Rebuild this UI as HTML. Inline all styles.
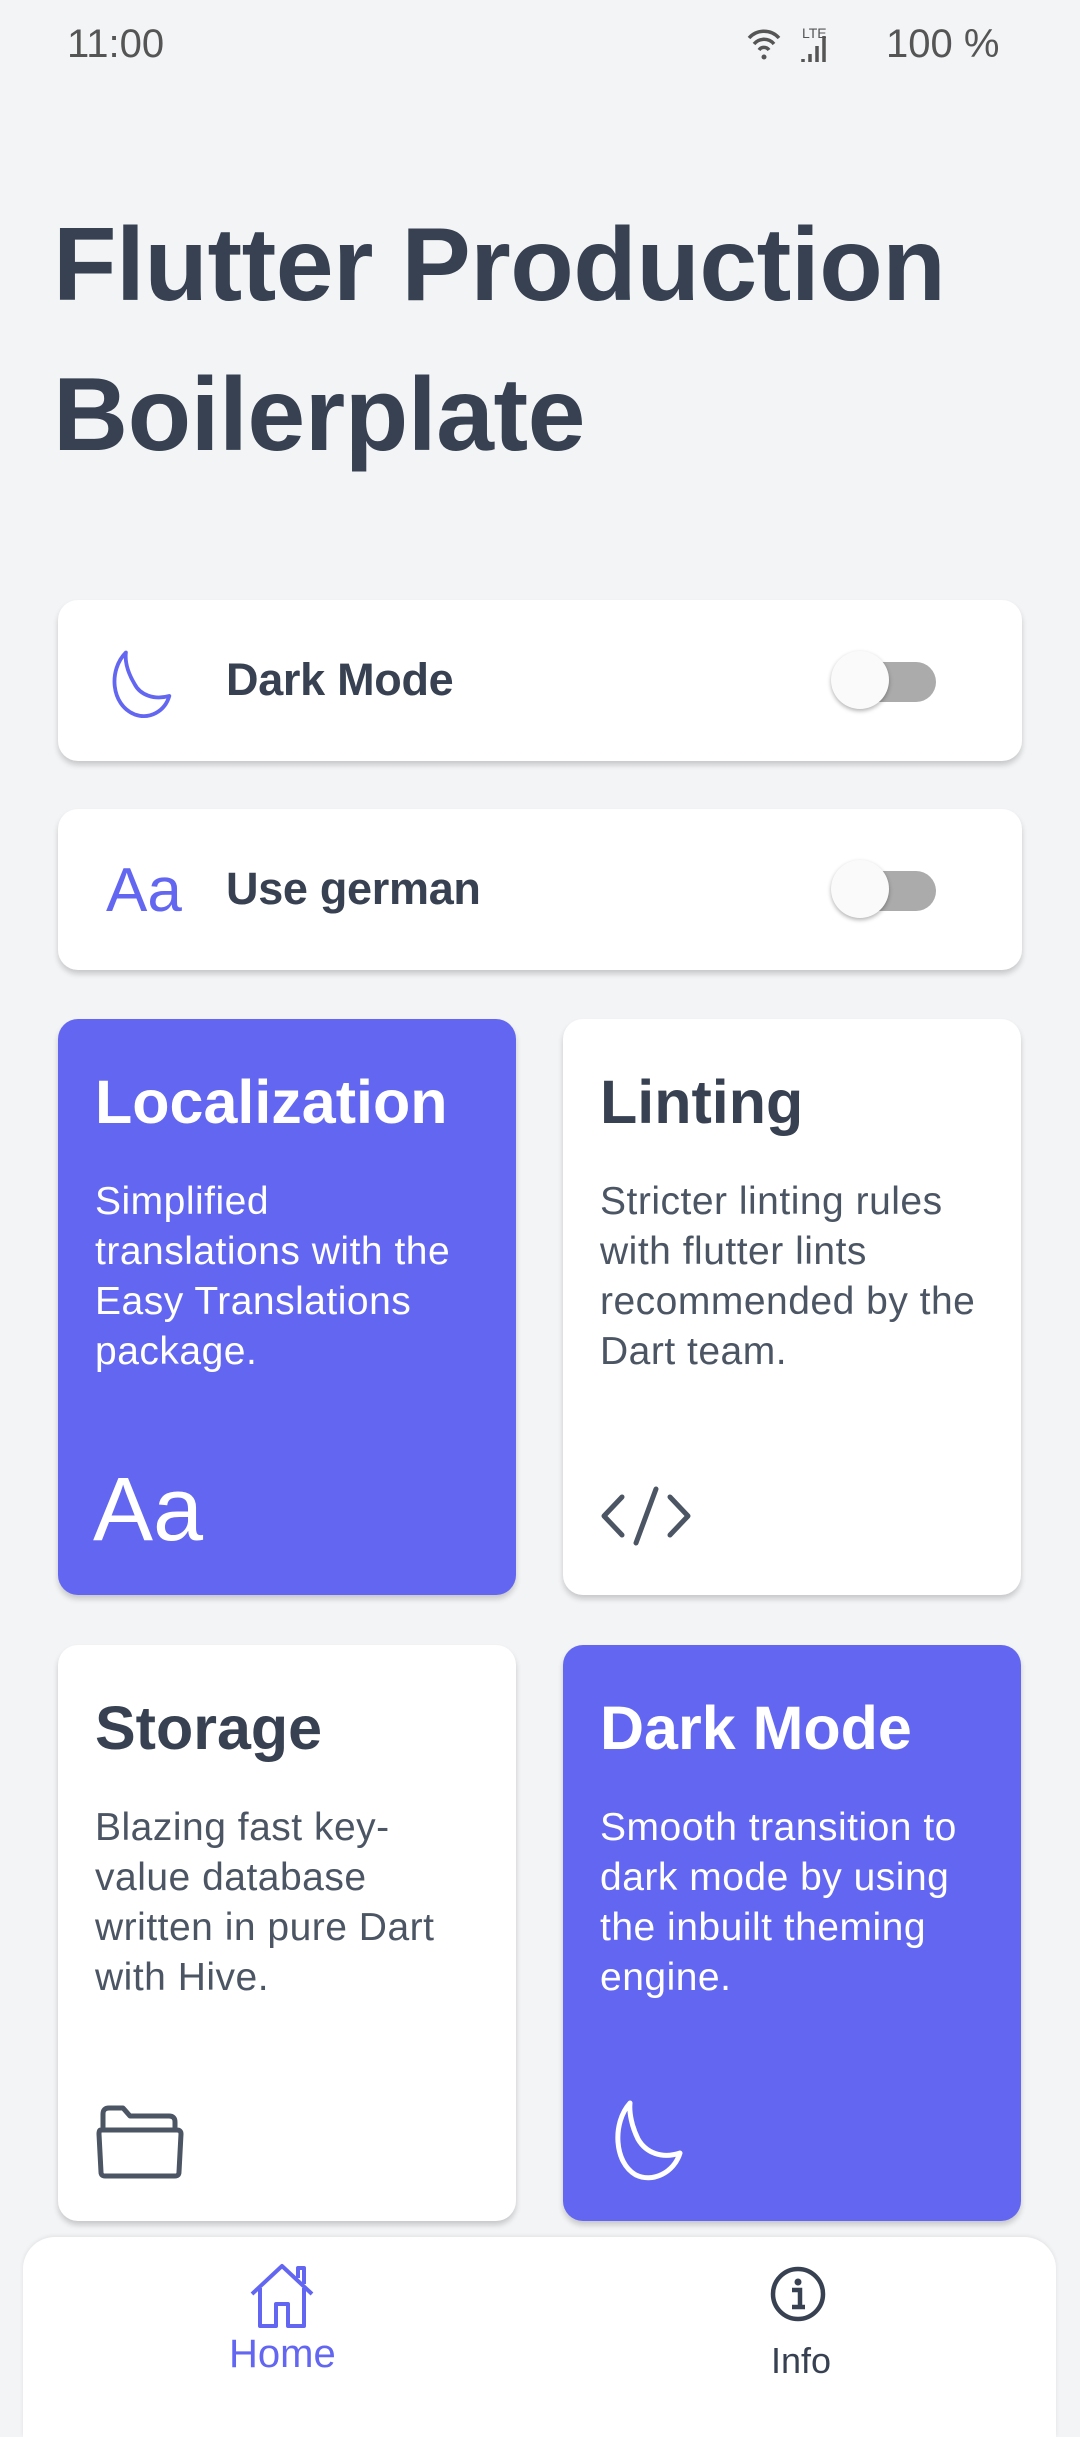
<!DOCTYPE html>
<html><head><meta charset="utf-8"><style>
*{margin:0;padding:0;box-sizing:border-box}
body{width:1080px;height:2400px;background:#f3f4f6;font-family:"Liberation Sans",sans-serif;position:relative;overflow:hidden;color:#374151}
.abs{position:absolute}
.status{font-size:40px;color:#555;top:22px}
.title{left:53px;top:190px;font-size:104px;font-weight:bold;line-height:150px;color:#374151;letter-spacing:-0.5px}
.row{position:absolute;left:58px;width:964px;height:161px;background:#fff;border-radius:20px;box-shadow:0 4px 6px rgba(0,0,0,0.18)}
.row .lbl{position:absolute;left:168px;top:54px;font-size:45px;font-weight:bold;color:#374151;letter-spacing:-0.3px}
.track{position:absolute;left:776px;top:62px;width:102px;height:40px;border-radius:20px;background:#ababab}
.thumb{position:absolute;left:773px;top:51px;width:58px;height:58px;border-radius:50%;background:#fafafa;box-shadow:0 2px 4px rgba(0,0,0,0.3)}
.card{position:absolute;width:458px;height:576px;border-radius:20px;background:#fff;box-shadow:0 4px 6px rgba(0,0,0,0.18)}
.card.p{background:#6366f1;color:#fff}
.card h2{position:absolute;left:37px;top:48px;font-size:61px;font-weight:bold}
.card p{position:absolute;left:37px;top:158px;width:420px;font-size:39px;line-height:50px;color:#4b5563;letter-spacing:0.5px}
.card.p p{color:#fff}
.nav{position:absolute;left:23px;top:2237px;width:1033px;height:200px;background:#fff;border-radius:32px 32px 0 0;box-shadow:0 -1px 4px rgba(0,0,0,0.08)}
</style></head><body>
<div class="abs status" style="left:67px">11:00</div>
<div class="abs status" style="left:886px">100 %</div>
<svg class="abs" style="left:745px;top:24px" width="85" height="42" viewBox="0 0 85 42">
<g fill="none" stroke="#555" stroke-width="3.5"><path d="M4 14 A20 20 0 0 1 34 14"/><path d="M9 20 A13 13 0 0 1 29 20"/><path d="M14 26 A6 6 0 0 1 24 26"/></g><circle cx="19" cy="33" r="2.5" fill="#555"/>
<path d="M58 38 v-3 M65 38 v-8 M72 38 v-16 M79 38 v-26" stroke="#555" stroke-width="3.5"/>
<text x="57" y="14" font-size="14" fill="#555" font-family="Liberation Sans">LTE</text>
</svg>
<div class="abs title">Flutter Production<br>Boilerplate</div>

<div class="row" style="top:600px">
<svg class="abs" style="left:44px;top:46px" width="76" height="76" viewBox="0 0 70 70"><path d="M22 6 C6 22 8 54 30 63 C44 68 58 60 62 46 C48 50 35 45 30 35 C24 25 21 15 22 6Z" fill="none" stroke="#6366f1" stroke-width="3.5" stroke-linejoin="round"/></svg>
<div class="lbl">Dark Mode</div><div class="track"></div><div class="thumb"></div></div>
<div class="row" style="top:809px">
<div class="abs" style="left:48px;top:46px;font-size:62px;color:#6366f1">Aa</div>
<div class="lbl">Use german</div><div class="track"></div><div class="thumb"></div></div>

<div class="card p" style="left:58px;top:1019px"><h2>Localization</h2><p>Simplified<br>translations with the<br>Easy Translations<br>package.</p>
<div class="abs" style="left:35px;top:440px;font-size:90px">Aa</div></div>
<div class="card" style="left:563px;top:1019px"><h2>Linting</h2><p>Stricter linting rules<br>with flutter lints<br>recommended by the<br>Dart team.</p>
<svg class="abs" style="left:37px;top:466px" width="92" height="62" viewBox="0 0 92 62"><path d="M22 12 L4 31 L22 50 M70 12 L88 31 L70 50 M56 4 L36 58" fill="none" stroke="#4b5563" stroke-width="5" stroke-linecap="round" stroke-linejoin="round"/></svg></div>
<div class="card" style="left:58px;top:1645px"><h2>Storage</h2><p>Blazing fast key-<br>value database<br>written in pure Dart<br>with Hive.</p>
<svg class="abs" style="left:37px;top:459px" width="90" height="76" viewBox="0 0 90 76"><path d="M8 28 V10 Q8 4 14 4 H28 L35 12 H74 Q80 12 80 18 V28 M6 26 H82 Q86 26 86 30 L84 68 Q84 72 80 72 H10 Q6 72 6 68 L4 30 Q4 26 6 26Z" fill="none" stroke="#4b5563" stroke-width="5" stroke-linejoin="round"/></svg></div>
<div class="card p" style="left:563px;top:1645px"><h2>Dark Mode</h2><p>Smooth transition to<br>dark mode by using<br>the inbuilt theming<br>engine.</p>
<svg class="abs" style="left:37px;top:450px" width="90" height="90" viewBox="0 0 90 90"><path d="M30 8 C12 28 14 68 36 80 C52 88 74 78 80 58 C62 64 46 58 38 44 C32 32 29 18 30 8Z" fill="none" stroke="#fff" stroke-width="5" stroke-linejoin="round"/></svg></div>

<div class="nav">
<svg class="abs" style="left:225px;top:25px" width="70" height="68" viewBox="0 0 70 68"><path d="M4 32 L34 4 L64 32 M12 26 V64 H28 V42 H40 V64 H56 V26 M50 16 V6 H56 V22" fill="none" stroke="#6366f1" stroke-width="4" stroke-linejoin="round"/></svg>
<div class="abs" style="left:206px;top:95px;font-size:40px;color:#6366f1">Home</div>
<svg class="abs" style="left:746px;top:28px" width="58" height="58" viewBox="0 0 58 58"><circle cx="29" cy="29" r="25" fill="none" stroke="#374151" stroke-width="4.5"/><circle cx="29" cy="17" r="3.5" fill="#374151"/><path d="M23 25 H31 V42 M23 42 H36" fill="none" stroke="#374151" stroke-width="4.5"/></svg>
<div class="abs" style="left:748px;top:103px;font-size:36px;color:#374151">Info</div>
</div>
</body></html>
